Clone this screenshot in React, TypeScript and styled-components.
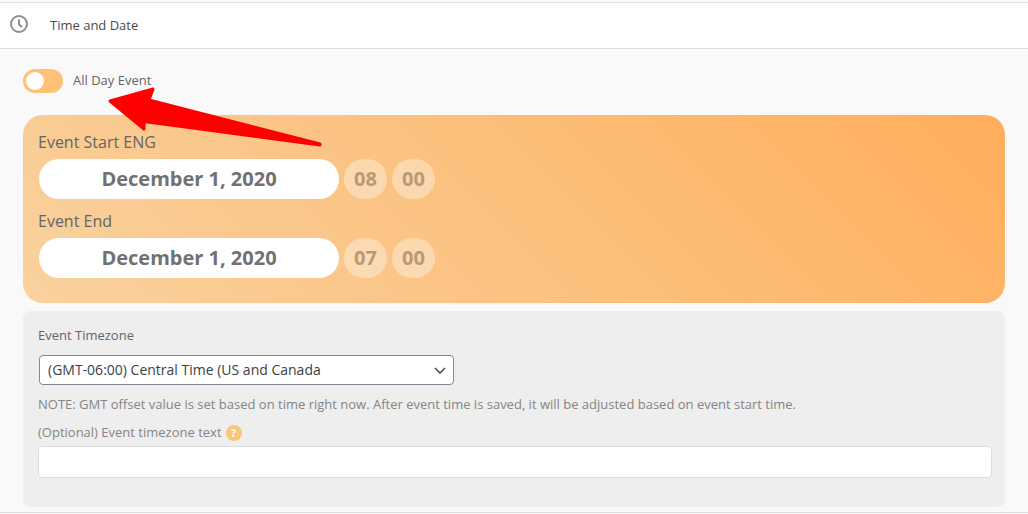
import React, { useState } from "react";
import styled, { createGlobalStyle } from "styled-components";

const GlobalStyle = createGlobalStyle`
  *, *::before, *::after { box-sizing: border-box; }
  body {
    margin: 0;
    background: #f9f9f9;
    color: #656565;
    font-family: "Open Sans", "Noto Sans", sans-serif;
    font-size: 13px;
    line-height: 18px;
  }
  input, select, button { font-family: inherit; }
`;

const Page = styled.main`
  padding-top: 2px;
`;

const Section = styled.section`
  position: relative;
  border-top: 1px solid #dedede;
  border-bottom: 1px solid #dedede;
`;

const SectionHeader = styled.header`
  display: flex;
  align-items: center;
  gap: 21px;
  height: 46px;
  padding: 0 10px 2px;
  background: #fff;
  border-bottom: 1px solid #dedede;
`;

const ClockIcon = styled.svg`
  width: 19px;
  height: 19px;
`;

const SectionTitle = styled.h2`
  margin: 0;
  font-size: 13px;
  font-weight: 400;
  line-height: 18px;
  color: #4a4a4a;
`;

const SectionBody = styled.div`
  padding: 20px 23px 5px;
`;

const ToggleRow = styled.label`
  display: flex;
  align-items: center;
  gap: 10px;
  width: fit-content;
  margin-bottom: 22px;
`;

const ToggleText = styled.span`
  padding-bottom: 2px;
`;

const Switch = styled.input`
  appearance: none;
  display: flex;
  align-items: center;
  width: 40px;
  height: 24px;
  margin: 0;
  padding: 0 3px;
  border-radius: 12px;
  background: #ffc178;
  cursor: pointer;

  &::before {
    content: "";
    width: 18px;
    height: 18px;
    border-radius: 50%;
    background: #fff;
  }

  &:checked {
    justify-content: flex-end;
  }
`;

const Pointer = styled.svg`
  position: absolute;
  top: 82px;
  left: 106px;
  width: 218px;
  height: 64px;
  pointer-events: none;
`;

const ScheduleCard = styled.div`
  display: flex;
  flex-direction: column;
  gap: 10px;
  padding: 15px 15px 25px;
  border-radius: 20px;
  background: linear-gradient(45deg, #f9d29f 0%, #ffae5b 100%);
`;

const TimeGroup = styled.fieldset`
  margin: 0;
  padding: 0;
  border: 0;
  min-width: 0;
`;

const GroupLabel = styled.legend`
  padding: 0;
  margin-bottom: 5px;
  font-size: 16px;
  line-height: 24px;
`;

const TimeFields = styled.div`
  display: flex;
  gap: 5px;
  padding-left: 1px;
`;

const Pill = styled.input<{ $muted?: boolean }>`
  width: ${(p) => (p.$muted ? "43px" : "300px")};
  height: 40px;
  padding: 0 0 2px;
  border: 0;
  border-radius: 20px;
  background: ${(p) => (p.$muted ? "rgba(255, 255, 255, 0.35)" : "#fff")};
  color: ${(p) => (p.$muted ? "#b89a78" : "#717171")};
  font-size: 20px;
  font-weight: 700;
  text-align: center;
`;

const ZonePanel = styled.div`
  display: flex;
  flex-direction: column;
  margin-top: 8px;
  padding: 15px 13px 29px 15px;
  border-radius: 8px;
  background: #eee;
`;

const ZoneLabel = styled.label`
  margin-bottom: 11px;
`;

const SelectBox = styled.div`
  position: relative;
  width: 415px;
  max-width: 100%;
  margin: 0 0 10px 1px;
`;

const ZoneSelect = styled.select`
  appearance: none;
  display: block;
  width: 100%;
  height: 30px;
  padding: 0 24px 2px 8px;
  border: 1px solid #7e8993;
  border-radius: 4px;
  background: #fff;
  color: #3c4146;
  font-size: 14px;
`;

const Chevron = styled.svg`
  position: absolute;
  top: 7px;
  right: 6px;
  width: 16px;
  height: 16px;
  pointer-events: none;
`;

const Note = styled.p`
  margin: 0 0 9px;
  color: #858585;
`;

const OptionalRow = styled.div`
  display: flex;
  align-items: center;
  gap: 4px;
  margin-bottom: 5px;
  color: #858585;
`;

const HelpButton = styled.button`
  display: flex;
  align-items: center;
  justify-content: center;
  width: 16px;
  height: 16px;
  margin-top: 3px;
  padding: 0;
  border: 0;
  border-radius: 50%;
  background: #f9c678;
  color: #fff;
  font-size: 10px;
  font-weight: 800;
  line-height: 16px;
`;

const ZoneInput = styled.input`
  width: 100%;
  height: 32px;
  padding: 0 8px;
  border: 1px solid #ddd;
  border-radius: 4px;
  background: #fff;
  color: #3c4146;
  font-size: 14px;
`;

type Moment = { label: string; date: string; hour: string; minute: string };

const moments: Moment[] = [
  { label: "Event Start ENG", date: "December 1, 2020", hour: "08", minute: "00" },
  { label: "Event End", date: "December 1, 2020", hour: "07", minute: "00" },
];

function TimeRow({ label, date, hour, minute }: Moment) {
  return (
    <TimeGroup>
      <GroupLabel>{label}</GroupLabel>
      <TimeFields>
        <Pill aria-label={`${label} date`} defaultValue={date} />
        <Pill $muted aria-label={`${label} hour`} defaultValue={hour} />
        <Pill $muted aria-label={`${label} minute`} defaultValue={minute} />
      </TimeFields>
    </TimeGroup>
  );
}

export default function App() {
  const [allDay, setAllDay] = useState(false);

  return (
    <>
      <GlobalStyle />
      <Page>
        <Section>
          <SectionHeader>
            <ClockIcon viewBox="0 0 19 19" fill="none" stroke="#8f8f8f" aria-hidden>
              <circle cx="9" cy="9" r="8" strokeWidth="2" />
              <path d="M9 4.500V9.500L12 12" strokeWidth="2" />
            </ClockIcon>
            <SectionTitle>Time and Date</SectionTitle>
          </SectionHeader>
          <SectionBody>
            <ToggleRow>
              <Switch
                type="checkbox"
                role="switch"
                checked={allDay}
                onChange={(e) => setAllDay(e.target.checked)}
              />
              <ToggleText>All Day Event</ToggleText>
            </ToggleRow>

            <ScheduleCard>
              {moments.map((m) => (
                <TimeRow key={m.label} {...m} />
              ))}
            </ScheduleCard>

            <ZonePanel>
              <ZoneLabel htmlFor="timezone">Event Timezone</ZoneLabel>
              <SelectBox>
                <ZoneSelect id="timezone">
                  <option>(GMT-06:00) Central Time (US and Canada</option>
                </ZoneSelect>
                <Chevron viewBox="0 0 16 16" aria-hidden>
                  <path d="M3 6 8 11 13 6" fill="none" stroke="#555" strokeWidth="1.700" />
                </Chevron>
              </SelectBox>
              <Note>
                NOTE: GMT offset value is set based on time right now. After event time is saved,
                it will be adjusted based on event start time.
              </Note>
              <OptionalRow>
                <label htmlFor="timezone-text">(Optional) Event timezone text</label>
                <HelpButton type="button">?</HelpButton>
              </OptionalRow>
              <ZoneInput id="timezone-text" type="text" />
            </ZonePanel>
          </SectionBody>

          <Pointer viewBox="0 0 218 64" aria-hidden>
            <path
              d="M4 16 47 4 43 15 214 59 214 60 38 36.500 38 44Z"
              fill="#f00"
              stroke="#f00"
              strokeWidth="3"
              strokeLinejoin="round"
            />
          </Pointer>
        </Section>
      </Page>
    </>
  );
}
